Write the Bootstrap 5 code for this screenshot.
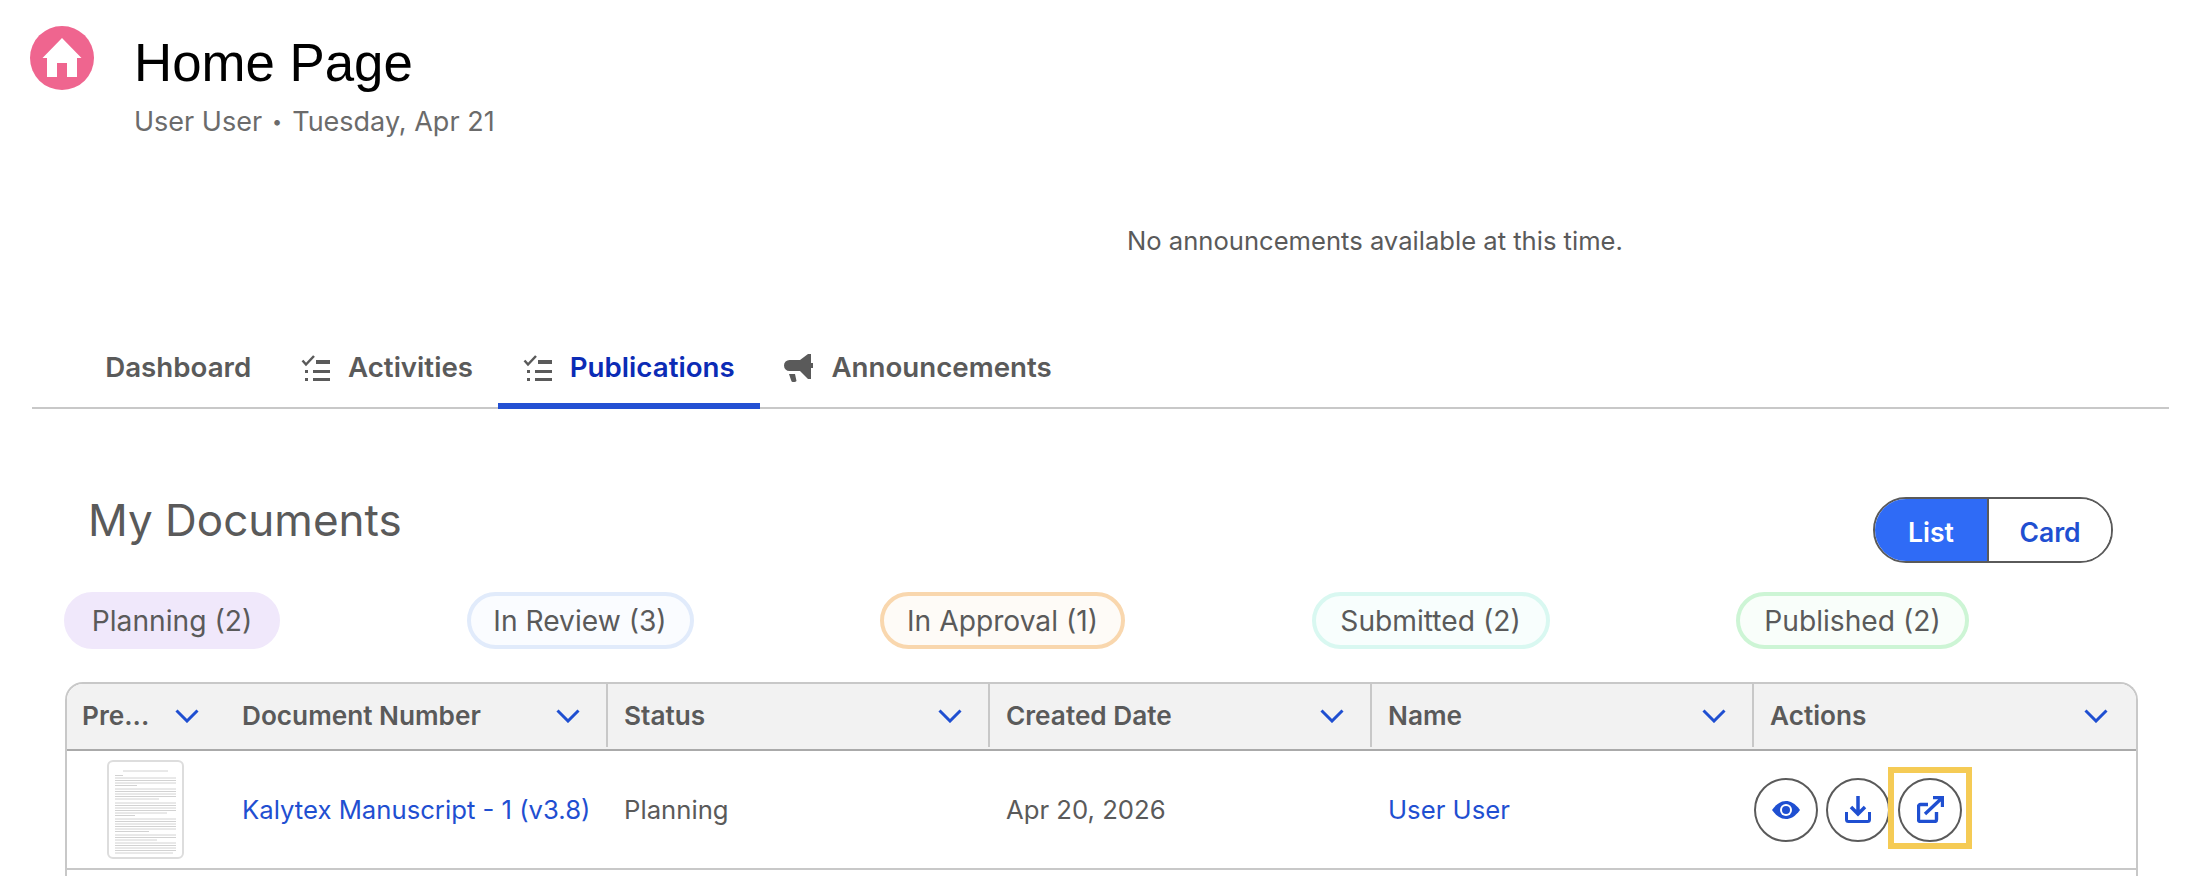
<!DOCTYPE html>
<html lang="en">
<head>
  <meta charset="UTF-8" />
  <title>Home Page</title>
  <link href="https://cdn.jsdelivr.net/npm/bootstrap@5.3.0/dist/css/bootstrap.min.css" rel="stylesheet">
  <style>
    html, body { height: 876px; overflow: hidden; }
    body { font-family: Inter, "Liberation Sans", sans-serif; color: #5a5a5a; background: #fff; }
    .page-head { padding: 26px 0 0 30px; gap: 40px; }
    .home-icon { width: 64px; height: 64px; border-radius: 50%; background: #ef658f; flex: none; }
    .page-title { font-family: "Liberation Sans", Arial, sans-serif; font-size: 52.8px; line-height: 60px; color: #000; font-weight: 400; margin: 7px 0 0; }
    .page-sub { font-size: 27px; line-height: 32px; color: #6b6b6b; margin-top: 13px; }
    .sub-dot { font-size: 18px; vertical-align: 3px; margin: 0 2.4px; }
    .announce { font-size: 25.6px; line-height: 32px; color: #5a5a5a; padding-left: 1127px; margin-top: 87px; }
    .tab-bar { margin: 70px 27px 0 32px; border-bottom: 2px solid #c8c8c8; height: 82px; padding-left: 48.3px; }
    .tab-item { font-size: 27.7px; font-weight: 600; color: #5a5a5a; height: 82px; padding: 6px 24.9px 0; gap: 17px; text-decoration: none; border-bottom: 6px solid transparent; }
    .tab-item.tab-on { color: #0b2bb5; border-bottom-color: #2350d3; }
    .doc-head { margin: 0 83px 0 88px; padding-top: 88px; }
    .doc-title { font-size: 44px; font-weight: 400; color: #5a5a5a; margin: -4px 0 0; line-height: 54px; }
    .view-switch { border: 2px solid #5a5a5a; border-radius: 33px; overflow: hidden; height: 66px; width: 240px; }
    .view-btn { font-size: 26.5px; font-weight: 600; flex: 1 1 0; background: #fff; color: #1f4fd1; border: 0; padding: 5px 0 0; }
    .view-btn.view-on { background: #2f6bf6; color: #fff; border-right: 2px solid #5a5a5a; flex: none; width: 114px; }
    .pill-row { margin: 29px 0 0 64px; gap: 186.5px; }
    .stage-pill { font-size: 28.2px; height: 57px; padding-top: 2px; border: 4px solid transparent; border-radius: 29px; color: #5a5a5a; flex: none; }
    .stage-plan { width: 216px; background: #f0e8fb; border-color: #f0e8fb; }
    .stage-review { width: 227px; background: #fafcff; border-color: #e1ebfb; }
    .stage-approve { width: 245px; background: #fefbf7; border-color: #f9d7ae; }
    .stage-submit { width: 238px; background: #f8fefd; border-color: #d9f8f1; }
    .stage-publish { width: 233px; background: #f9fefa; border-color: #cdf5d5; }
    .doc-wrap { margin: 33px 58px 0 65px; border: 2px solid #c8c8c8; border-bottom: 0; border-radius: 18px 18px 0 0; overflow: hidden; height: 194px; }
    .doc-table { table-layout: fixed; width: 100%; border-collapse: separate; border-spacing: 0; margin: 0; }
    .doc-table th { padding: 0; background: #f2f2f2; border-bottom: 2px solid #aaa; font-weight: 600; font-size: 26.2px; color: #5a5a5a; height: 67px; vertical-align: top; }
    .head-cell { height: 63px; padding: 0 26px 0 16px; }
    .head-cell.head-first { padding: 0 27px 0 15px; }
    .head-cell.head-last { padding-right: 28px; }
    .head-cell.has-rule { border-right: 2px solid #c8c8c8; }
    .doc-table td { padding: 2px 16px 0; height: 119px; border-bottom: 2px solid #c8c8c8; font-size: 25.7px; color: #5a5a5a; vertical-align: middle; white-space: nowrap; }
    .doc-table td.cell-flush { padding: 0; }
    .doc-link { color: #1f4fd1; text-decoration: none; }
    .act-btn { width: 64px; height: 64px; border: 2px solid #5a5a5a; border-radius: 50%; background: #fff; padding: 0; }
    .act-row { gap: 8px; }
    .mark-box { position: absolute; left: -10px; top: -11px; width: 84px; height: 82px; border: 6px solid #f5cb55; pointer-events: none; }
    .thumb-doc { width: 77px; height: 99px; display: block; margin-left: 40px; }
  </style>
</head>
<body>
  <div class="d-flex page-head">
    <div class="home-icon">
      <svg width="64" height="64" viewBox="0 0 64 64"><path fill="#fff" d="M32 12 L51.5 32 H47 V51 H37 V37 H27 V51 H17 V32 H12.5Z"/></svg>
    </div>
    <div>
      <h1 class="page-title">Home Page</h1>
      <div class="page-sub">User User <span class="sub-dot">&bull;</span> Tuesday, Apr 21</div>
    </div>
  </div>

  <div class="announce">No announcements available at this time.</div>

  <nav class="d-flex tab-bar">
    <a class="d-flex align-items-center tab-item" href="#">Dashboard</a>
    <a class="d-flex align-items-center tab-item" href="#">
      <svg width="30" height="28" viewBox="0 0 30 28"><path d="M1.5 6.5L5 10.5 13 2" fill="none" stroke="#5a5a5a" stroke-width="2.5"/><path fill="#5a5a5a" d="M15 6h14v4H15zM12 16h17v3H12zM12 24h17v3H12zM4 16h3v3H4zM4 24h3v3H4z"/></svg>
      Activities</a>
    <a class="d-flex align-items-center tab-item tab-on" href="#">
      <svg width="30" height="28" viewBox="0 0 30 28"><path d="M1.5 6.5L5 10.5 13 2" fill="none" stroke="#5a5a5a" stroke-width="2.5"/><path fill="#5a5a5a" d="M15 6h14v4H15zM12 16h17v3H12zM12 24h17v3H12zM4 16h3v3H4zM4 24h3v3H4z"/></svg>
      Publications</a>
    <a class="d-flex align-items-center tab-item" href="#">
      <svg width="30" height="30" viewBox="0 0 30 30"><path fill="#5a5a5a" d="M5.5 7H16L24 1h3v9h2v5h-2v11h-3l-8-8H5.5a5.5 5.5 0 0 1 0-11zM5 21h6l1.5 7q-1 1-2 1h-2q-1 0-1.5-2z"/></svg>
      Announcements</a>
  </nav>

  <div class="d-flex justify-content-between doc-head">
    <h2 class="doc-title">My Documents</h2>
    <div class="d-flex view-switch">
      <button class="view-btn view-on">List</button>
      <button class="view-btn">Card</button>
    </div>
  </div>

  <div class="d-flex pill-row">
    <div class="d-flex align-items-center justify-content-center stage-pill stage-plan">Planning (2)</div>
    <div class="d-flex align-items-center justify-content-center stage-pill stage-review">In Review (3)</div>
    <div class="d-flex align-items-center justify-content-center stage-pill stage-approve">In Approval (1)</div>
    <div class="d-flex align-items-center justify-content-center stage-pill stage-submit">Submitted (2)</div>
    <div class="d-flex align-items-center justify-content-center stage-pill stage-publish">Published (2)</div>
  </div>

  <div class="doc-wrap">
    <table class="doc-table">
      <colgroup><col style="width:159px"><col style="width:382px"><col><col><col><col></colgroup>
      <thead>
        <tr>
          <th><div class="d-flex justify-content-between align-items-center head-cell head-first">Pre...<svg width="24" height="14" viewBox="0 0 24 14"><path d="M1.5 1.5L12 12 22.5 1.5" fill="none" stroke="#1f4fd1" stroke-width="3"/></svg></div></th>
          <th><div class="d-flex justify-content-between align-items-center head-cell has-rule">Document Number<svg width="24" height="14" viewBox="0 0 24 14"><path d="M1.5 1.5L12 12 22.5 1.5" fill="none" stroke="#1f4fd1" stroke-width="3"/></svg></div></th>
          <th><div class="d-flex justify-content-between align-items-center head-cell has-rule">Status<svg width="24" height="14" viewBox="0 0 24 14"><path d="M1.5 1.5L12 12 22.5 1.5" fill="none" stroke="#1f4fd1" stroke-width="3"/></svg></div></th>
          <th><div class="d-flex justify-content-between align-items-center head-cell has-rule">Created Date<svg width="24" height="14" viewBox="0 0 24 14"><path d="M1.5 1.5L12 12 22.5 1.5" fill="none" stroke="#1f4fd1" stroke-width="3"/></svg></div></th>
          <th><div class="d-flex justify-content-between align-items-center head-cell has-rule">Name<svg width="24" height="14" viewBox="0 0 24 14"><path d="M1.5 1.5L12 12 22.5 1.5" fill="none" stroke="#1f4fd1" stroke-width="3"/></svg></div></th>
          <th><div class="d-flex justify-content-between align-items-center head-cell head-last">Actions<svg width="24" height="14" viewBox="0 0 24 14"><path d="M1.5 1.5L12 12 22.5 1.5" fill="none" stroke="#1f4fd1" stroke-width="3"/></svg></div></th>
        </tr>
      </thead>
      <tbody>
        <tr>
          <td class="cell-flush">
            <svg class="thumb-doc" viewBox="0 0 77 99">
              <rect x="1" y="1" width="75" height="97" rx="5" fill="#fff" stroke="#ddd" stroke-width="2"/>
              <path fill="none" stroke="#c6c6c6" stroke-width=".8" d="M16 11H61M8 15.5H16M8 18H69M8 20.5H69M8 23H69M8 25.5H30M8 29H69M8 31.5H69M8 34H69M8 36.5H69M8 39H52M8 43H69M8 45.5H69M8 48H69M8 50.5H69M8 53H60M8 55.5H28M8 59H69M8 61.5H69M8 64H69M8 66.5H69M8 69H69M8 71.5H42M8 75H69M8 77.5H69M8 80H50M8 83H69M8 85.5H69M8 88H69M8 90.5H69M8 93H66"/>
            </svg>
          </td>
          <td><a class="doc-link" href="#">Kalytex Manuscript - 1 (v3.8)</a></td>
          <td>Planning</td>
          <td>Apr 20, 2026</td>
          <td><a class="doc-link" href="#">User User</a></td>
          <td class="cell-flush">
            <div class="d-flex act-row">
              <button class="d-flex align-items-center justify-content-center act-btn">
                <svg width="28" height="18" viewBox="0 0 28 18"><path fill="#1f4fd1" d="M0 9C5 2 10 0 14 0s9 2 14 9c-5 7-10 9-14 9S5 16 0 9z"/><circle cx="14" cy="9" r="6" fill="#fff"/><circle cx="14" cy="9" r="4" fill="#1f4fd1"/></svg>
              </button>
              <button class="d-flex align-items-center justify-content-center act-btn">
                <svg width="26" height="27" viewBox="0 0 26 27"><path d="M1.5 16v7.5a2 2 0 0 0 2 2h19a2 2 0 0 0 2-2V16" fill="none" stroke="#1f4fd1" stroke-width="3"/><path d="M13 0v17M6 11l7 7 7-7" fill="none" stroke="#1f4fd1" stroke-width="3.5"/></svg>
              </button>
              <span class="position-relative d-inline-block">
                <button class="d-flex align-items-center justify-content-center act-btn">
                  <svg width="27" height="27" viewBox="0 0 27 27"><path d="M11 8.5H3.5a2 2 0 0 0-2 2v13a2 2 0 0 0 2 2h14a2 2 0 0 0 2-2V16" fill="none" stroke="#1f4fd1" stroke-width="3.4"/><path d="M8 18L25 2M16 1.5h9.5V11" fill="none" stroke="#1f4fd1" stroke-width="3.4"/></svg>
                </button>
                <span class="mark-box"></span>
              </span>
            </div>
          </td>
        </tr>
      </tbody>
    </table>
  </div>
</body>
</html>
